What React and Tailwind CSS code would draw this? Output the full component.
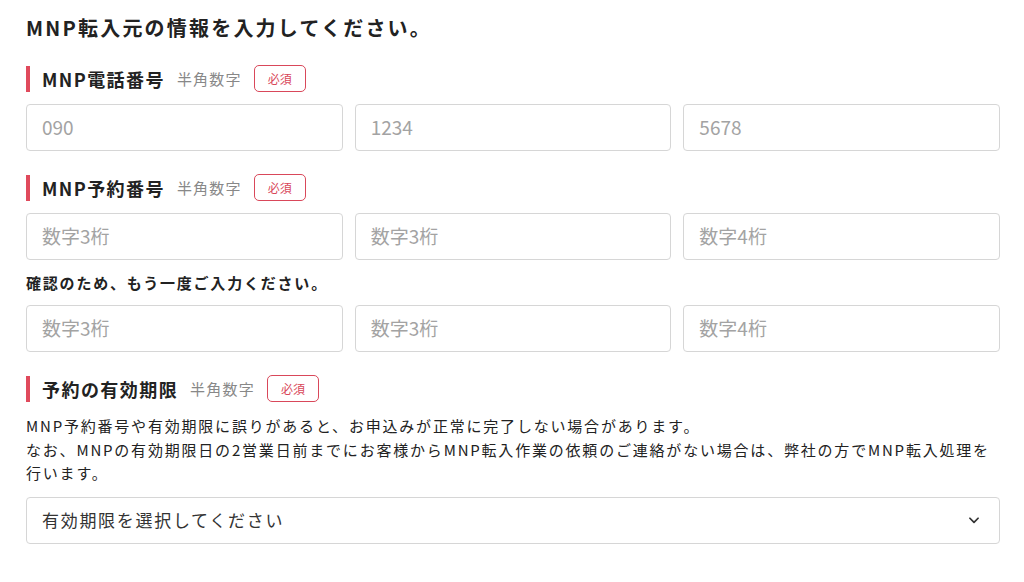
import React from 'react';

const FONT = { fontFamily: '"Noto Sans CJK JP", "Noto Sans", sans-serif' };

const Label = ({ title, sub = '半角数字' }) => (
  <div className="flex items-center h-[27px]">
    <span className="w-[4px] h-[26px] bg-[#e04a5c] mr-[12px]" />
    <span className="text-[18px] font-bold text-[#222] leading-none tracking-[0.08em]">{title}</span>
    <span className="ml-[12px] text-[15px] text-[#888] leading-none tracking-[0.08em]">{sub}</span>
    <span className="ml-[12px] h-[27px] w-[52px] flex items-center justify-center border border-[#d9485a] rounded-[5px] text-[12px] text-[#d9485a]">
      必須
    </span>
  </div>
);

const Input = ({ placeholder }) => (
  <div className="flex-1 h-[47px] border border-[#d6d6d6] rounded-[4px] flex items-center px-[15px] text-[19px] text-[#a3a3a3] bg-white">
    {placeholder}
  </div>
);

const InputRow = ({ items }) => (
  <div className="flex gap-[12px]">
    {items.map((p, i) => (
      <Input key={i} placeholder={p} />
    ))}
  </div>
);

export default function App() {
  return (
    <div className="bg-white w-[1024px] h-[582px] pl-[26px] pr-[24px] pt-[14px]" style={FONT}>
      <h1 className="text-[20px] font-bold text-[#222] leading-[28px] tracking-[0.11em]">MNP転入元の情報を入力してください。</h1>

      <div className="mt-[23px]">
        <Label title="MNP電話番号" />
      </div>
      <div className="mt-[12px]">
        <InputRow items={['090', '1234', '5678']} />
      </div>

      <div className="mt-[23px]">
        <Label title="MNP予約番号" />
      </div>
      <div className="mt-[12px]">
        <InputRow items={['数字3桁', '数字3桁', '数字4桁']} />
      </div>
      <p className="mt-[13px] text-[15px] font-bold text-[#222] leading-[20px] tracking-[0.12em]">確認のため、もう一度ご入力ください。</p>
      <div className="mt-[12px]">
        <InputRow items={['数字3桁', '数字3桁', '数字4桁']} />
      </div>

      <div className="mt-[23px]">
        <Label title="予約の有効期限" />
      </div>
      <div className="mt-[12px] text-[15px] text-[#222] leading-[23.5px] tracking-[0.12em] whitespace-nowrap">
        <p>MNP予約番号や有効期限に誤りがあると、お申込みが正常に完了しない場合があります。</p>
        <p>
          なお、MNPの有効期限日の2営業日前までにお客様からMNP転入作業の依頼のご連絡がない場合は、弊社の方でMNP転入処理を
          <br />
          行います。
        </p>
      </div>
      <div className="mt-[12px] h-[47px] border border-[#d6d6d6] rounded-[4px] flex items-center justify-between pl-[15px] pr-[18px] text-[17px] text-[#333] tracking-[0.1em]">
        <span>有効期限を選択してください</span>
        <svg width="14" height="14" viewBox="0 0 24 24" fill="none" stroke="#333" strokeWidth="3" strokeLinecap="round" strokeLinejoin="round">
          <path d="M5 9l7 7 7-7" />
        </svg>
      </div>
    </div>
  );
}
